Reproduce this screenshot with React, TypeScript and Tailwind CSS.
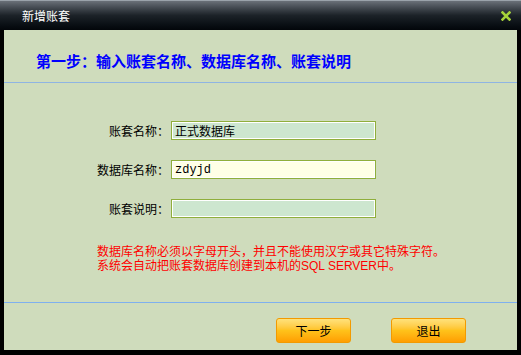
const cjk = "font-['SimSun','Noto_Sans_CJK_SC',sans-serif]";

function Field({ label, value, active }: { label: string; value?: string; active?: boolean }) {
  return (
    <div className="flex items-center h-[19px]">
      <span className="w-[165px] text-right text-[12px] text-black leading-[19px]">{label}</span>
      <div
        className={`ml-[2px] w-[205px] h-[19px] border border-[#8fae3c] outline outline-1 -outline-offset-2 outline-white flex items-center pl-[3px] text-[12px] text-black ${
          active ? "bg-[#ffffe6] font-['Liberation_Mono',monospace]" : "bg-[#cde6cf]"
        }`}
      >
        {value}
      </div>
    </div>
  );
}

function OrangeButton({ children }: { children: React.ReactNode }) {
  return (
    <button className="w-[75px] h-[25px] rounded-[3px] border border-[#f29a00] bg-gradient-to-b from-[#ffe27a] via-[#ffc21a] to-[#ff9e00] text-[12px] text-black leading-none">
      {children}
    </button>
  );
}

export default function App() {
  return (
    <div className={`w-[521px] h-[355px] bg-black flex flex-col ${cjk}`}>
      {/* title bar */}
      <div className="h-[30px] flex items-center justify-between border-t border-[#9aa2aa] bg-gradient-to-b from-[#6a7078] via-[#1c2228] to-[#03060a] pl-[22px] pr-[10px]">
        <span className="text-[12px] text-white">新增账套</span>
        <svg width="10" height="10" viewBox="0 0 10 10">
          <path d="M1.5 1.5 L8.5 8.5 M8.5 1.5 L1.5 8.5" stroke="#a6d23a" strokeWidth="2.6" strokeLinecap="square" />
        </svg>
      </div>

      {/* body */}
      <div className="flex-1 ml-[4px] mr-[4px] mb-[5px] bg-[#cfdcbc] flex flex-col">
        <div className="pt-[21px] pl-[32px] h-[53px] text-[15px] font-bold text-[#0000ff] leading-[20px] border-b border-[#8fb4e2]">
          第一步：输入账套名称、数据库名称、账套说明
        </div>

        <div className="mt-[38px] flex flex-col gap-[20px]">
          <Field label="账套名称：" value="正式数据库" />
          <Field label="数据库名称：" value="zdyjd" active />
          <Field label="账套说明：" />
        </div>

        <div className="mt-[27px] pl-[93px] text-[12px] leading-[14px] text-[#ff0000] font-['Liberation_Sans','Noto_Sans_CJK_SC',sans-serif]">
          <p>数据库名称必须以字母开头，并且不能使用汉字或其它特殊字符。</p>
          <p>系统会自动把账套数据库创建到本机的SQL SERVER中。</p>
        </div>

        <div className="mt-[29px] border-b border-[#7fb0ee]" />

        <div className="mt-[15px] flex gap-[40px] pl-[272px]">
          <OrangeButton>下一步</OrangeButton>
          <OrangeButton>退出</OrangeButton>
        </div>
      </div>
    </div>
  );
}
